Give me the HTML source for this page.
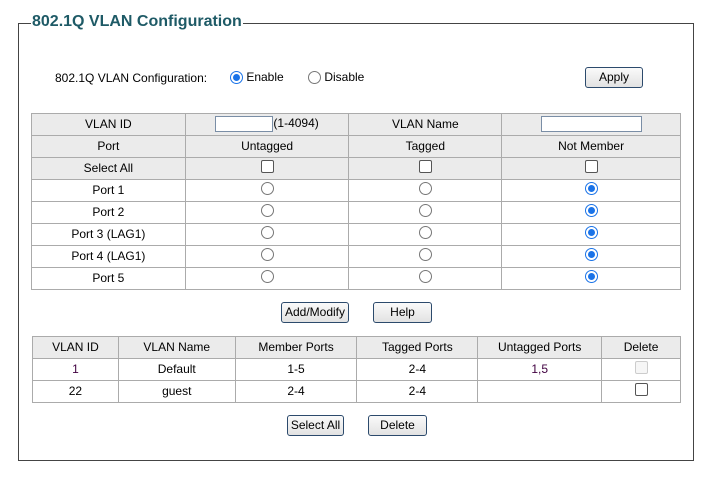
<!DOCTYPE html>
<html><head><meta charset="utf-8"><style>
body{margin:0;width:720px;height:488px;background:#fff;font-family:"Liberation Sans",Arial,sans-serif;font-size:12px;color:#000;position:relative;overflow:hidden}
.a{position:absolute}
.fs{position:absolute;left:18px;top:23px;width:674px;height:437px;border:1px solid #444;border-top:none}
.tl{position:absolute;top:23px;height:1px;background:#444}
.leg{position:absolute;left:31px;top:13px;font-size:16px;font-weight:bold;color:#1e5a66;background:#fff;padding:0 1px}
table{position:absolute;border-collapse:collapse}
td{border:1px solid #ababab;text-align:center;padding:0 0 1px 0;height:20px;vertical-align:middle}
.g td{background:#ebebeb}
.btn{position:absolute;height:19px;border:1px solid #2c4a6c;border-radius:3px;background:linear-gradient(#fafafa,#e2e2e2);text-align:center;line-height:19px;font-size:12px}
.r{display:inline-block;width:11px;height:11px;border:1px solid #777;border-radius:50%;vertical-align:middle;position:relative;top:-2px;background:#fff}
.r.on{border-color:#1a73e8;width:11px;height:11px}
.r.on::after{content:"";position:absolute;left:2px;top:2px;width:7px;height:7px;border-radius:50%;background:#1a73e8}
.c{display:inline-block;width:11px;height:11px;border:1px solid #555;border-radius:2px;vertical-align:middle;position:relative;top:-2px;background:#fff}
.c.dis{border-color:#ccc;background:#f6f6f6}
.inp{display:inline-block;width:56px;height:14px;border:1px solid #7a8ea6;vertical-align:middle;background:#fff}
</style></head><body>
<div class="fs"></div>
<div class="tl" style="left:18px;width:14px"></div>
<div class="tl" style="left:240px;width:453px"></div>
<div class="leg">802.1Q VLAN Configuration</div>

<div class="a" style="left:55px;top:71px">802.1Q VLAN Configuration:</div>
<div class="a" style="left:230px;top:70px"><span class="r on" style="top:0"></span> Enable</div>
<div class="a" style="left:308px;top:70px"><span class="r" style="top:0"></span> Disable</div>
<div class="btn" style="left:585px;top:67px;width:56px">Apply</div>

<table style="left:31px;top:113px;width:650px">
<colgroup><col style="width:154px"><col style="width:164px"><col style="width:153px"><col style="width:179px"></colgroup>
<tr class="g"><td>VLAN ID</td><td><span class="inp"></span>(1-4094)</td><td>VLAN Name</td><td><span class="inp" style="width:99px"></span></td></tr>
<tr class="g"><td>Port</td><td>Untagged</td><td>Tagged</td><td>Not Member</td></tr>
<tr class="g"><td>Select All</td><td><span class="c"></span></td><td><span class="c"></span></td><td><span class="c"></span></td></tr>
<tr><td>Port 1</td><td><span class="r"></span></td><td><span class="r"></span></td><td><span class="r on"></span></td></tr>
<tr><td>Port 2</td><td><span class="r"></span></td><td><span class="r"></span></td><td><span class="r on"></span></td></tr>
<tr><td>Port 3 (LAG1)</td><td><span class="r"></span></td><td><span class="r"></span></td><td><span class="r on"></span></td></tr>
<tr><td>Port 4 (LAG1)</td><td><span class="r"></span></td><td><span class="r"></span></td><td><span class="r on"></span></td></tr>
<tr><td>Port 5</td><td><span class="r"></span></td><td><span class="r"></span></td><td><span class="r on"></span></td></tr>
</table>

<div class="btn" style="left:281px;top:302px;width:66px">Add/Modify</div>
<div class="btn" style="left:373px;top:302px;width:57px">Help</div>

<table style="left:32px;top:336px;width:649px">
<colgroup><col style="width:86px"><col style="width:117px"><col style="width:122px"><col style="width:121px"><col style="width:124px"><col style="width:79px"></colgroup>
<tr class="g"><td>VLAN ID</td><td>VLAN Name</td><td>Member Ports</td><td>Tagged Ports</td><td>Untagged Ports</td><td>Delete</td></tr>
<tr><td style="color:#400040">1</td><td>Default</td><td>1-5</td><td>2-4</td><td style="color:#400040">1,5</td><td><span class="c dis"></span></td></tr>
<tr><td>22</td><td>guest</td><td>2-4</td><td>2-4</td><td></td><td><span class="c"></span></td></tr>
</table>

<div class="btn" style="left:287px;top:415px;width:55px">Select All</div>
<div class="btn" style="left:368px;top:415px;width:57px">Delete</div>
</body></html>
